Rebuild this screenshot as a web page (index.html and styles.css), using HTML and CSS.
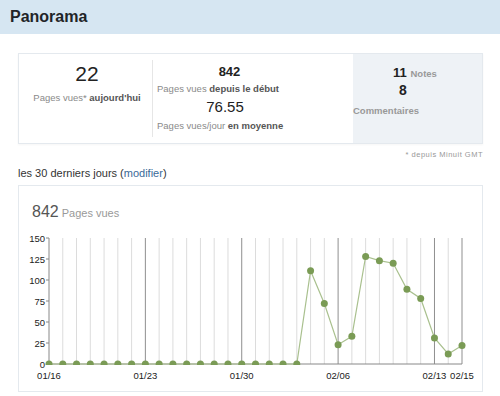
FILE: index.html
```html
<!DOCTYPE html>
<html>
<head>
    <meta name="viewport" content="width=device-width, initial-scale=1.0">
    <title>Panorama</title>
    <link rel="stylesheet" href="styles.css">
</head>
<body>
    <div class="header">Panorama</div>

    <div class="statsBox">
        <div class="statCell todayCell">
            <div class="bigNum">22</div>
            <div class="statLabel">Pages vues* <b>aujourd'hui</b></div>
        </div>
        <div class="statCell totalCell">
            <div class="midNum">842</div>
            <div class="statLabel">Pages vues <b>depuis le début</b></div>
            <div class="avgNum">76.55</div>
            <div class="statLabel">Pages vues/jour <b>en moyenne</b></div>
        </div>
        <div class="statCell sideCell">
            <div class="notesLine"><b>11</b> <span>Notes</span></div>
            <div class="commentNum"><b>8</b></div>
            <div class="commentLabel">Commentaires</div>
        </div>
    </div>
    <div class="footnote">* depuis Minuit GMT</div>

    <div class="periodLine">les 30 derniers jours (<a href="#">modifier</a>)</div>

    <div class="chartBox">
        <div class="chartTitle"><span class="chartNum">842</span> Pages vues</div>
        <svg class="chart" width="464" height="160" viewBox="19 228 464 160">
            <defs>
                <clipPath id="plotClip"><rect x="19" y="228" width="464" height="137"></rect></clipPath>
            </defs>
            <path class="gridLight" d="M62.77 238V364M76.53 238V364M90.3 238V364M104.07 238V364M117.83 238V364M131.6 238V364M159.13 238V364M172.9 238V364M186.67 238V364M200.43 238V364M214.2 238V364M227.97 238V364M255.5 238V364M269.27 238V364M283.03 238V364M296.8 238V364M310.57 238V364M324.33 238V364M351.87 238V364M365.63 238V364M379.4 238V364M393.17 238V364M406.93 238V364M420.7 238V364M448.23 238V364"></path>
            <path class="gridDark" d="M145.37 238V364M241.73 238V364M338.1 238V364M434.47 238V364M462 238V364"></path>
            <path class="axis" d="M49 238V364H462M46 238H49M46 259H49M46 280H49M46 301H49M46 322H49M46 343H49M46 364H49"></path>
            <g class="yLabels">
                <text x="45" y="241.5">150</text>
                <text x="45" y="262.5">125</text>
                <text x="45" y="283.5">100</text>
                <text x="45" y="304.5">75</text>
                <text x="45" y="325.5">50</text>
                <text x="45" y="346.5">25</text>
                <text x="45" y="367.5">0</text>
            </g>
            <g class="xLabels">
                <text x="49" y="379">01/16</text>
                <text x="145.37" y="379">01/23</text>
                <text x="241.73" y="379">01/30</text>
                <text x="338.1" y="379">02/06</text>
                <text x="434.47" y="379">02/13</text>
                <text x="462" y="379">02/15</text>
            </g>
            <polyline class="dataLine" points="49,364 296.8,364 310.57,270.76 324.33,303.52 338.1,344.68 351.87,336.28 365.63,256.48 379.4,260.68 393.17,263.2 406.93,289.24 420.7,298.48 434.47,337.96 448.23,353.92 462,345.52"></polyline>
            <g class="dots" clip-path="url(#plotClip)">
                <circle cx="49" cy="364" r="3.5"></circle>
                <circle cx="62.77" cy="364" r="3.5"></circle>
                <circle cx="76.53" cy="364" r="3.5"></circle>
                <circle cx="90.3" cy="364" r="3.5"></circle>
                <circle cx="104.07" cy="364" r="3.5"></circle>
                <circle cx="117.83" cy="364" r="3.5"></circle>
                <circle cx="131.6" cy="364" r="3.5"></circle>
                <circle cx="145.37" cy="364" r="3.5"></circle>
                <circle cx="159.13" cy="364" r="3.5"></circle>
                <circle cx="172.9" cy="364" r="3.5"></circle>
                <circle cx="186.67" cy="364" r="3.5"></circle>
                <circle cx="200.43" cy="364" r="3.5"></circle>
                <circle cx="214.2" cy="364" r="3.5"></circle>
                <circle cx="227.97" cy="364" r="3.5"></circle>
                <circle cx="241.73" cy="364" r="3.5"></circle>
                <circle cx="255.5" cy="364" r="3.5"></circle>
                <circle cx="269.27" cy="364" r="3.5"></circle>
                <circle cx="283.03" cy="364" r="3.5"></circle>
                <circle cx="296.8" cy="364" r="3.5"></circle>
                <circle cx="310.57" cy="270.76" r="3.5"></circle>
                <circle cx="324.33" cy="303.52" r="3.5"></circle>
                <circle cx="338.1" cy="344.68" r="3.5"></circle>
                <circle cx="351.87" cy="336.28" r="3.5"></circle>
                <circle cx="365.63" cy="256.48" r="3.5"></circle>
                <circle cx="379.4" cy="260.68" r="3.5"></circle>
                <circle cx="393.17" cy="263.2" r="3.5"></circle>
                <circle cx="406.93" cy="289.24" r="3.5"></circle>
                <circle cx="420.7" cy="298.48" r="3.5"></circle>
                <circle cx="434.47" cy="337.96" r="3.5"></circle>
                <circle cx="448.23" cy="353.92" r="3.5"></circle>
                <circle cx="462" cy="345.52" r="3.5"></circle>
            </g>
        </svg>
    </div>
</body>
</html>
```

FILE: styles.css
```css
body {
    margin: 0;
    padding: 0;
    font-family: "Liberation Sans", Arial, sans-serif;
    color: #333;
    background-color: #fff;
}
.header {
    height: 34px;
    line-height: 34px;
    padding-left: 10px;
    background-color: #d6e6f2;
    font-size: 16px;
    font-weight: bold;
    color: #1f2428;
}
.statsBox {
    display: flex;
    width: 463px;
    height: 89px;
    margin: 19px 0 0 18px;
    border: 1px solid #e4e9ee;
    box-shadow: 0 1px 2px rgba(0, 0, 0, 0.04);
}
.statCell {
    display: flex;
    flex-direction: column;
    align-items: center;
}
.todayCell {
    width: 130px;
    padding: 8px 0 0 3px;
}
.totalCell {
    width: 196px;
    margin: 6px 0;
    padding-left: 4px;
    align-items: flex-start;
    border-left: 1px solid #e6e6e6;
}
.sideCell {
    flex: 1;
    align-items: flex-start;
    background-color: #eef2f6;
    padding-top: 11px;
}
.bigNum {
    font-size: 21px;
    line-height: 24px;
    color: #222;
}
.midNum {
    width: 145px;
    text-align: center;
    font-size: 13px;
    font-weight: bold;
    line-height: 16px;
    margin-top: 4px;
    color: #222;
}
.avgNum {
    width: 136px;
    text-align: center;
    font-size: 15px;
    line-height: 18px;
    margin-top: 3px;
    color: #222;
}
.statLabel {
    font-size: 9.5px;
    line-height: 12px;
    margin-top: 6px;
    color: #8a8a8a;
}
.totalCell .statLabel {
    margin-top: 3px;
}
.totalCell .statLabel:last-child {
    margin-top: 4px;
}
.statLabel b {
    color: #555;
}
.notesLine {
    width: 124px;
    text-align: center;
    font-size: 13px;
    line-height: 16px;
    color: #222;
}
.notesLine span {
    font-size: 9.5px;
    font-weight: bold;
    color: #999;
}
.commentNum {
    width: 100px;
    text-align: center;
    font-size: 14px;
    line-height: 16px;
    color: #222;
}
.commentLabel {
    font-size: 9.5px;
    font-weight: bold;
    color: #999;
    margin-top: 7px;
}
.footnote {
    width: 483px;
    text-align: right;
    font-size: 7.5px;
    letter-spacing: 0.5px;
    color: #999;
    margin-top: 6px;
}
.periodLine {
    margin: 8px 0 0 18px;
    font-size: 11px;
    color: #333;
}
.periodLine a {
    color: #3a6a98;
    text-decoration: none;
}
.chartBox {
    width: 463px;
    height: 205px;
    margin: 6px 0 0 18px;
    border: 1px solid #e4e9ee;
}
.chartTitle {
    padding: 17px 0 0 13px;
    font-size: 11px;
    color: #999;
}
.chartNum {
    font-size: 16px;
    color: #555;
}
.chart {
    display: block;
    margin-top: 7px;
}
.gridLight {
    stroke: #dcdcdc;
    stroke-width: 1;
    fill: none;
}
.gridDark {
    stroke: #8f8f8f;
    stroke-width: 1;
    fill: none;
}
.axis {
    stroke: #888;
    stroke-width: 1;
    fill: none;
}
.yLabels text {
    font-size: 9.5px;
    text-anchor: end;
    fill: #222;
}
.xLabels text {
    font-size: 9.5px;
    text-anchor: middle;
    fill: #222;
}
.dataLine {
    fill: none;
    stroke: #a9c08e;
    stroke-width: 1.2;
}
.dots circle {
    fill: #7a9b55;
}
```
